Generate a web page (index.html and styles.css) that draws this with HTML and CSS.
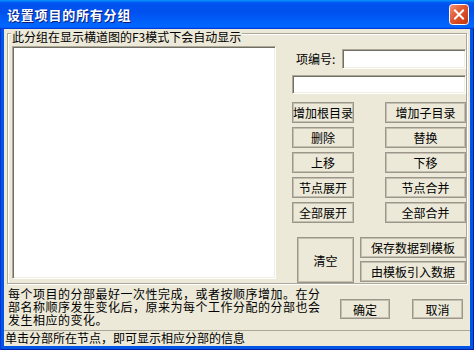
FILE: index.html
```html
<!DOCTYPE html>
<html lang="zh-CN">
<head>
<meta charset="utf-8">
<title>设置项目的所有分组</title>
<link rel="stylesheet" href="styles.css">
</head>
<body>
<div class="window">
  <div class="titlebar">
    <span class="title">设置项目的所有分组</span>
    <span class="close">
      <svg width="20" height="21" viewBox="0 0 20 21">
        <defs>
          <linearGradient id="cg" x1="0" y1="0" x2="1" y2="1">
            <stop offset="0" stop-color="#f0967a"/>
            <stop offset="0.45" stop-color="#e0572f"/>
            <stop offset="1" stop-color="#c2330c"/>
          </linearGradient>
        </defs>
        <rect x="0.5" y="0.5" width="19" height="20" rx="3" ry="3" fill="url(#cg)" stroke="#ffffff" stroke-width="1"/>
        <path d="M6 6.5 L14 14.5 M14 6.5 L6 14.5" stroke="#ffffff" stroke-width="2" stroke-linecap="square"/>
      </svg>
    </span>
  </div>
  <div class="client">
    <div class="group">
      <div class="legend">此分组在显示横道图的F3模式下会自动显示</div>
      <div class="group-body">
        <div class="listbox"></div>
        <div class="side">
          <div class="code-row">
            <span class="code-label">项编号:</span>
            <div class="input code-input"></div>
          </div>
          <div class="input wide-input"></div>
          <div class="btn-grid">
            <button class="btn">增加根目录</button>
            <button class="btn">增加子目录</button>
            <button class="btn">删除</button>
            <button class="btn">替换</button>
            <button class="btn">上移</button>
            <button class="btn">下移</button>
            <button class="btn">节点展开</button>
            <button class="btn">节点合并</button>
            <button class="btn">全部展开</button>
            <button class="btn">全部合并</button>
          </div>
          <div class="tpl-row">
            <button class="btn clear">清空</button>
            <div class="tpl-col">
              <button class="btn">保存数据到模板</button>
              <button class="btn">由模板引入数据</button>
            </div>
          </div>
        </div>
      </div>
    </div>
    <div class="footer">
      <p class="note">每个项目的分部最好一次性完成，或者按顺序增加。在分<br>部名称顺序发生变化后，原来为每个工作分配的分部也会<br>发生相应的变化。</p>
      <button class="btn ok">确定</button>
      <button class="btn cancel">取消</button>
    </div>
    <div class="status">单击分部所在节点，即可显示相应分部的信息</div>
  </div>
</div>
</body>
</html>
```

FILE: styles.css
```css
* {
  box-sizing: border-box;
}

html,
body {
  margin: 0;
  padding: 0;
}

body {
  width: 474px;
  height: 350px;
  overflow: hidden;
  background: #ffffff;
  font-family: "Noto Sans CJK SC", "Noto Sans", sans-serif;
  font-size: 12px;
  color: #000000;
}

.window {
  width: 474px;
  height: 350px;
  display: flex;
  flex-direction: column;
  background: #0055e5;
  box-shadow: inset 1px 0 0 #0831d9, inset -1px 0 0 #001ea0, inset 0 -1px 0 #001ea0;
}

.titlebar {
  flex: none;
  height: 29px;
  display: flex;
  align-items: center;
  padding: 0 5px 0 7px;
  background: linear-gradient(180deg, #0997ff 0%, #0053ee 10%, #0050ee 40%, #0066ff 88%, #0066ff 93%, #005bff 95%, #003dd7 97%, #003dd7 100%);
}

.title {
  flex: 1;
  color: #ffffff;
  font-weight: bold;
  font-size: 13px;
  letter-spacing: 0.8px;
  line-height: 15px;
  text-shadow: 1px 1px 0 #0a1b7a;
  white-space: nowrap;
}

.close {
  width: 20px;
  height: 21px;
  display: block;
}

.close svg {
  display: block;
}

.client {
  flex: 1;
  margin: 0 4px 4px 4px;
  background: #ece9d8;
  display: flex;
  flex-direction: column;
  padding: 4px 0 0 3px;
}

.group {
  flex: none;
  width: 460px;
  height: 251px;
  border: 1px solid #aca899;
  box-shadow: inset 1px 1px 0 #ffffff, 1px 1px 0 #ffffff;
}

.legend {
  margin: -4px 0 0 3px;
  padding: 0 1px;
  width: max-content;
  background: #ece9d8;
  line-height: 13px;
  white-space: nowrap;
}

.group-body {
  display: flex;
  margin-top: 3px;
  padding-left: 4px;
}

.listbox,
.input {
  background: #ffffff;
  border: 1px solid #aca899;
  border-right-color: #ffffff;
  border-bottom-color: #ffffff;
  box-shadow: inset 1px 1px 0 #716f64, inset -1px -1px 0 #f1efe2;
}

.listbox {
  width: 264px;
  height: 233px;
}

.side {
  width: 174px;
  margin-left: 16px;
  display: flex;
  flex-direction: column;
}

.code-row {
  display: flex;
  align-items: center;
  margin-top: 3px;
  height: 20px;
}

.code-label {
  width: 50px;
  padding-left: 4px;
  line-height: 13px;
  margin-top: -2px;
}

.code-input {
  width: 124px;
  height: 20px;
}

.wide-input {
  margin-top: 6px;
  width: 174px;
  height: 19px;
}

.btn-grid {
  margin-top: 8px;
  display: grid;
  grid-template-columns: 62px 81px;
  column-gap: 31px;
  row-gap: 4px;
}

.btn {
  display: block;
  height: 21px;
  margin: 0;
  padding: 0;
  font: inherit;
  color: #000000;
  line-height: 13px;
  text-align: center;
  background: #ece9d8;
  border: 1px solid #9b968a;
  box-shadow: inset 0 0 0 1px #c4bfb0;
  border-radius: 0;
}

.tpl-row {
  margin-top: 14px;
  display: flex;
}

.clear {
  margin-left: 5px;
  width: 57px;
  height: 46px;
}

.tpl-col {
  margin-left: 6px;
  width: 106px;
  display: flex;
  flex-direction: column;
  gap: 3px;
}

.footer {
  flex: none;
  display: flex;
  align-items: flex-start;
  margin-top: 3px;
  padding-left: 1px;
}

.note {
  flex: none;
  width: 310px;
  margin: 0;
  line-height: 13px;
  letter-spacing: 0.5px;
  white-space: nowrap;
}

.ok {
  flex: none;
  margin-left: 22px;
  margin-top: 12px;
  width: 50px;
  height: 20px;
}

.cancel {
  flex: none;
  margin-left: 22px;
  margin-top: 12px;
  width: 51px;
  height: 20px;
}

.status {
  flex: 1;
  margin: 4px 0 0 -3px;
  padding-left: 1px;
  border-top: 1px solid #aca899;
  line-height: 13px;
  white-space: nowrap;
}
```
